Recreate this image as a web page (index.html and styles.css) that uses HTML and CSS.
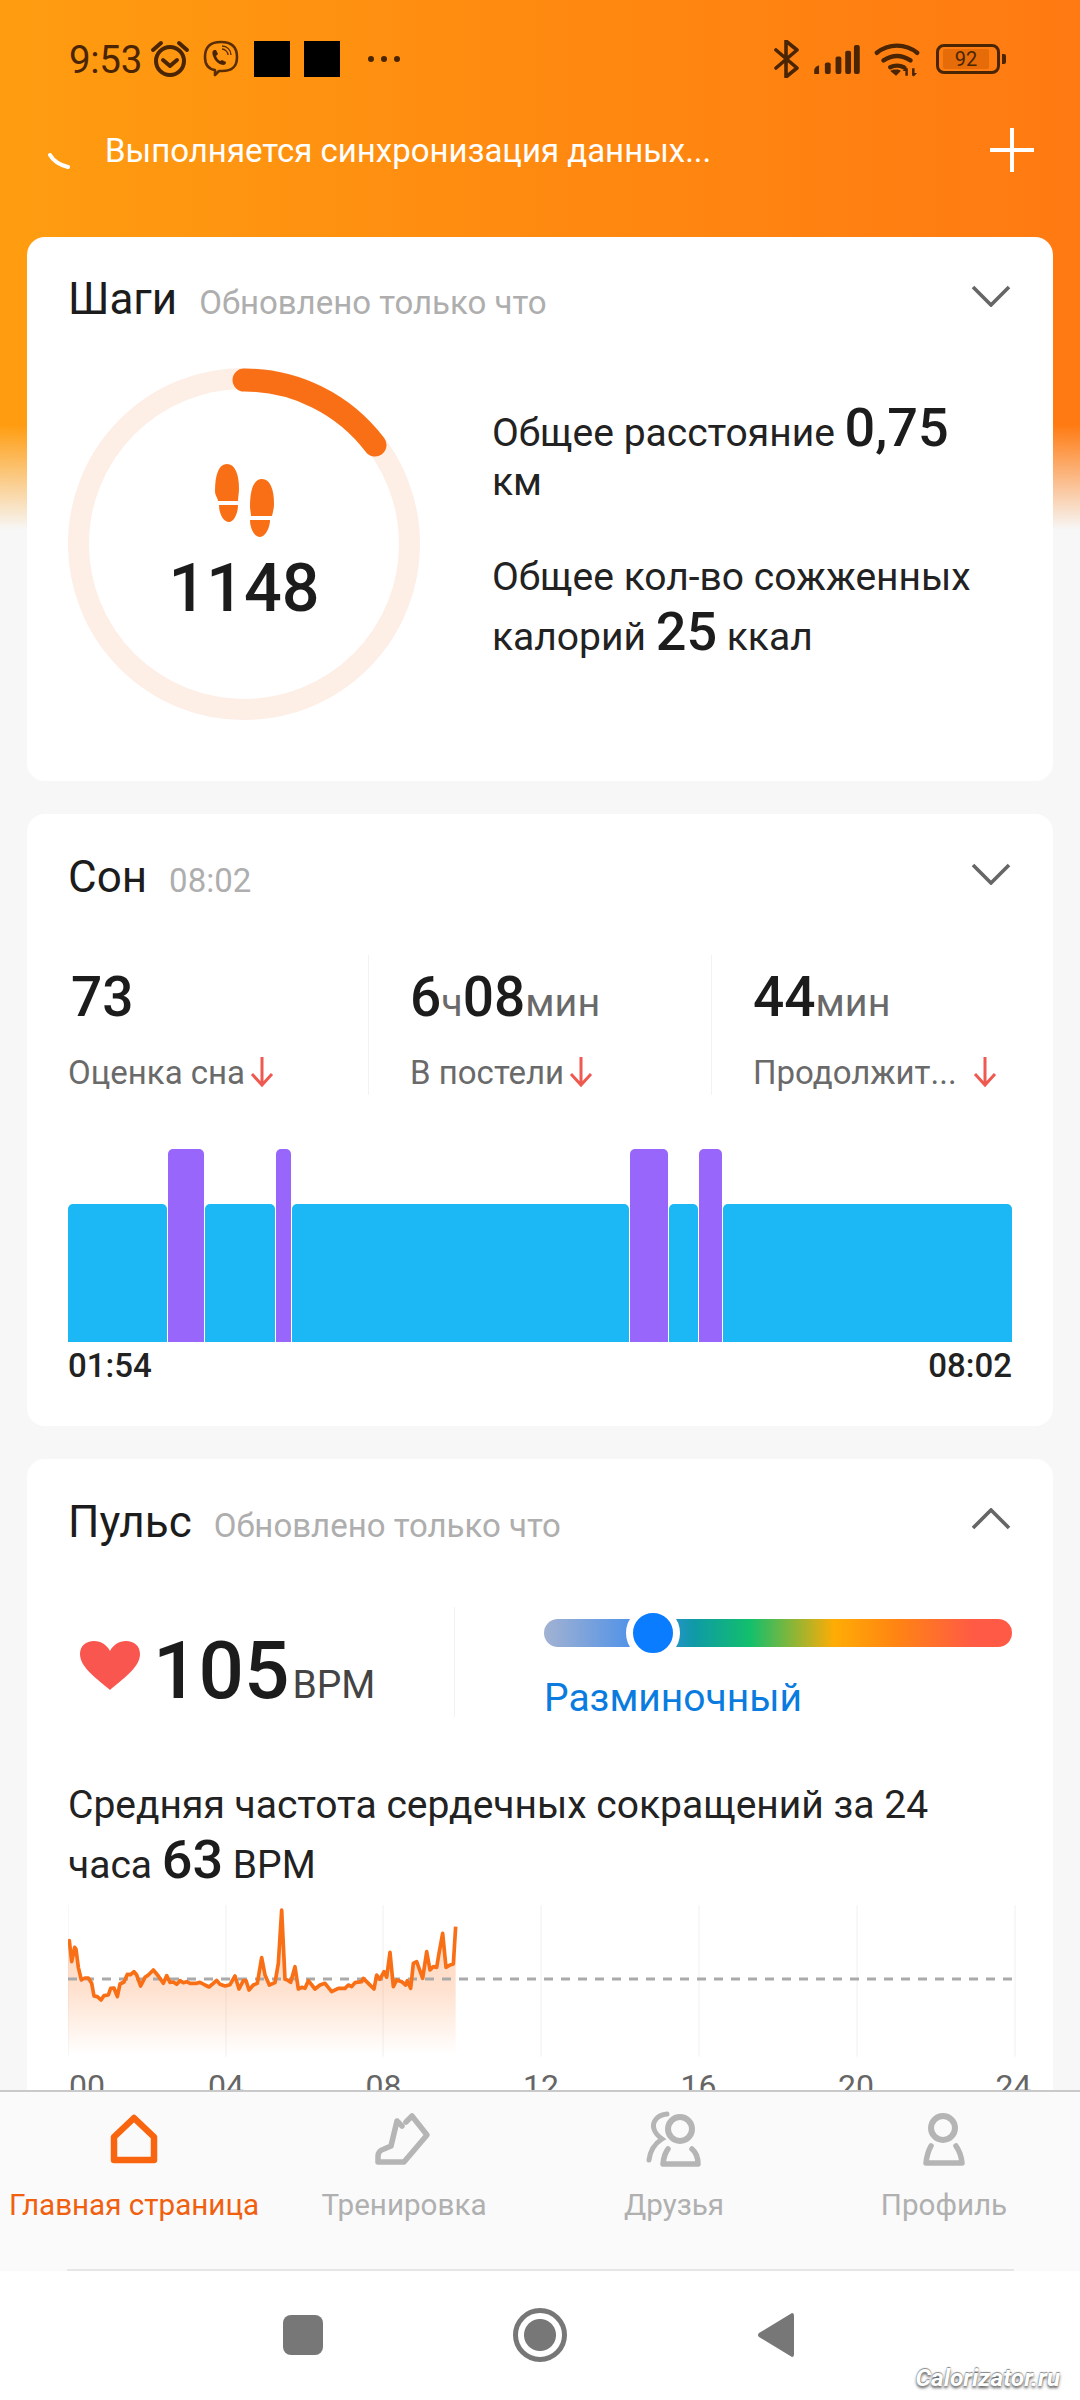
FILE: index.html
```html
<!DOCTYPE html>
<html lang="ru">
<head>
<meta charset="utf-8">
<title>Главная страница</title>
<link rel="stylesheet" href="styles.css">
</head>
<body>
<div class="screen">
  <div class="scroller">
    <div class="statusbar">
      <div class="status-left">
        <span class="clock">9:53</span>
        <svg class="ic-alarm" viewBox="0 0 40 38"><circle cx="20" cy="21" r="14" fill="none" stroke="#4a2504" stroke-width="4"/><path d="M13 20l7 6 7-6" fill="none" stroke="#4a2504" stroke-width="4" stroke-linecap="round" stroke-linejoin="round"/><path d="M3 10 11 3M37 10 29 3" stroke="#4a2504" stroke-width="4" stroke-linecap="round"/></svg>
        <svg class="ic-viber" viewBox="0 0 36 38"><path d="M12 30C5 29 2 25 2 17 2 7 7 2 18 2s16 5 16 15-5 14-15 14h-3l-4 4z" fill="none" stroke="#5a2e04" stroke-width="2.6" stroke-linejoin="round"/><path d="M11 10c-2 1-2 3-1 6 2 5 5 8 10 9 2 0 3-1 3-3l-4-2-2 1c-2-1-3-3-4-5l2-2-2-4z" fill="#4a2504"/><path d="M19 9c3 0 6 3 6 6M19 6c5 0 9 4 9 9" fill="none" stroke="#5a2e04" stroke-width="1.4"/></svg>
        <span class="blackbox"></span>
        <span class="blackbox"></span>
        <span class="dots"><i></i><i></i><i></i></span>
      </div>
      <div class="status-right">
        <svg class="ic-bt" viewBox="0 0 26 38"><path d="M2 10 23 28 12 37V1l11 9L2 28" fill="none" stroke="#4a2504" stroke-width="3.6" stroke-linejoin="round" stroke-linecap="round"/></svg>
        <svg class="ic-signal" viewBox="0 0 48 32"><g fill="#4a2504"><path d="M1 31v-4q0-3 5-5v9z"/><rect x="12" y="19" width="6" height="12" rx="2"/><rect x="23" y="13" width="6" height="18" rx="2"/><rect x="33" y="7" width="6" height="24" rx="2"/><rect x="42" y="1" width="6" height="30" rx="2"/></g></svg>
        <svg class="ic-wifi" viewBox="0 0 48 36"><path d="M3 11C15 1 33 1 45 11M10 19c9-6 19-6 28 0M17 26c4-2 10-2 14 0" fill="none" stroke="#4a2504" stroke-width="4.6" stroke-linecap="round"/><path d="M23 35l-6-5c3-2 9-2 11 0z" fill="#4a2504"/><path d="M34 35v-8M41 35v-8" stroke="#4a2504" stroke-width="2.6"/><path d="M30 30l4-5 0 5zM45 32l-4 4 0-4z" fill="#4a2504"/></svg>
        <span class="battery"><span class="battery-fill"><span class="battery-num">92</span></span></span>
        <span class="battery-nub"></span>
      </div>
    </div>

    <div class="syncbar">
      <div class="sync-left">
        <svg class="ic-spin" viewBox="0 0 24 16"><path d="M2 2C6 9 12 12 20 14" fill="none" stroke="#fff" stroke-width="4" stroke-linecap="round"/></svg>
        <span class="sync-text">Выполняется синхронизация данных...</span>
      </div>
      <svg class="ic-plus" viewBox="0 0 44 44"><path d="M22 0v44M0 22h44" stroke="#fff" stroke-width="4"/></svg>
    </div>

    <section class="card card-steps">
      <header class="card-head">
        <span class="card-title">Шаги</span>
        <span class="card-sub">Обновлено только что</span>
        <svg class="chev" viewBox="0 0 40 22"><path d="M2 2 20 20 38 2" fill="none" stroke="#666" stroke-width="3.6"/></svg>
      </header>
      <div class="steps-body">
        <div class="ring">
          <svg class="ring-svg" viewBox="0 0 352 352"><circle cx="176" cy="176" r="165.5" fill="none" stroke="#fdeee6" stroke-width="21"/><path d="M176 12A164 164 0 0 1 307 77" fill="none" stroke="#f96f15" stroke-width="23" stroke-linecap="round"/></svg>
          <div class="ring-center">
            <svg class="ic-feet" viewBox="0 0 59 73"><g fill="#f96f15"><path d="M0 27C0 10 4 0 12 0s12 10 12 25c0 4-1 8-1 12H3c0-3-3-5-3-10z"/><path d="M4 41h19c0 8-4 17-9 17-6 0-10-9-10-17z"/><path d="M35 42C35 25 39 15 47 15s12 10 12 25c0 4-1 8-2 12H36c0-3-1-6-1-10z"/><path d="M35 56h20c0 8-5 17-10 17-6 0-10-9-10-17z"/></g></svg>
            <span class="ring-num">1148</span>
          </div>
        </div>
        <div class="steps-text">
          <p class="line">Общее расстояние <b class="big">0,75</b> км</p>
          <p class="line">Общее кол-во сожженных калорий <b class="big">25</b> ккал</p>
        </div>
      </div>
    </section>

    <section class="card card-sleep">
      <header class="card-head">
        <span class="card-title">Сон</span>
        <span class="card-sub">08:02</span>
        <svg class="chev" viewBox="0 0 40 22"><path d="M2 2 20 20 38 2" fill="none" stroke="#666" stroke-width="3.6"/></svg>
      </header>
      <div class="stats">
        <div class="stat stat-1">
          <div class="stat-val val-73"><b>73</b></div>
          <div class="stat-label"><span>Оценка сна</span><svg class="arrow" viewBox="0 0 24 32"><path d="M12 1v28M2 18l10 11 10-11" fill="none" stroke="#ee5a50" stroke-width="3"/></svg></div>
        </div>
        <div class="stat stat-2">
          <div class="stat-val"><b>6</b><small>ч</small><b>08</b><small>мин</small></div>
          <div class="stat-label"><span>В постели</span><svg class="arrow" viewBox="0 0 24 32"><path d="M12 1v28M2 18l10 11 10-11" fill="none" stroke="#ee5a50" stroke-width="3"/></svg></div>
        </div>
        <div class="stat stat-3">
          <div class="stat-val"><b>44</b><small>мин</small></div>
          <div class="stat-label label-full"><span>Продолжит...</span><svg class="arrow" viewBox="0 0 24 32"><path d="M12 1v28M2 18l10 11 10-11" fill="none" stroke="#ee5a50" stroke-width="3"/></svg></div>
        </div>
      </div>
      <div class="sleep-chart">
        <div class="seg light" style="width:99px"></div>
        <div class="seg rem" style="width:36px"></div>
        <div class="seg light" style="width:70px"></div>
        <div class="seg rem" style="width:15px"></div>
        <div class="seg light" style="width:337px"></div>
        <div class="seg rem" style="width:38px"></div>
        <div class="seg light" style="width:29px"></div>
        <div class="seg rem" style="width:23px"></div>
        <div class="seg light" style="width:289px"></div>
      </div>
      <div class="sleep-times"><span>01:54</span><span>08:02</span></div>
    </section>

    <section class="card card-pulse">
      <header class="card-head">
        <span class="card-title">Пульс</span>
        <span class="card-sub">Обновлено только что</span>
        <svg class="chev" viewBox="0 0 40 22"><path d="M2 20 20 2 38 20" fill="none" stroke="#666" stroke-width="3.6"/></svg>
      </header>
      <div class="pulse-now">
        <div class="pulse-val">
          <svg class="ic-heart" viewBox="0 0 62 50"><path d="M31 50C20 40 1 28 1 14 1 6 7 1 15 1c7 0 13 4 16 10C34 5 40 1 47 1c8 0 14 5 14 13 0 14-19 26-30 36z" fill="#f9564f"/></svg>
          <b class="pulse-num">105</b><small class="pulse-unit">BPM</small>
        </div>
        <div class="pulse-zone">
          <div class="slider"><span class="knob"></span></div>
          <div class="zone-name">Разминочный</div>
        </div>
      </div>
      <p class="avg">Средняя частота сердечных сокращений за 24 часа <b class="big">63</b> BPM</p>
      <svg class="hr-chart" viewBox="84 45 2850 465">
        <defs><linearGradient id="hrfill" x1="0" y1="0" x2="0" y2="1"><stop offset="0" stop-color="#ff6a10" stop-opacity=".3"/><stop offset=".55" stop-color="#ff6a10" stop-opacity=".2"/><stop offset="1" stop-color="#ff6a10" stop-opacity="0"/></linearGradient></defs>
        <path d="M84 45V500M558 45V500M1029 45V500M1503 45V500M1977 45V500M2451 45V500M2925 45V500" stroke="#f0f0f0" stroke-width="3"/>
        <path d="M84 155 88 152 95 215 104 172 108 178 115 232 124 270 135 264 145 264 155 280 162 318 172 320 183 330 192 317 205 315 212 295 222 294 232 320 240 282 252 276 262 253 272 254 282 245 290 255 302 288 315 262 325 255 340 240 355 258 370 280 380 257 390 277 400 276 410 283 420 272 430 278 440 275 450 280 470 280 480 277 495 285 507 291 520 280 530 271 540 283 555 288 570 284 585 258 597 297 610 272 618 272 627 300 640 285 652 280 665 203 675 255 688 285 705 278 715 220 725 60 735 268 742 270 752 277 765 230 775 297 785 292 795 295 805 272 825 297 840 285 855 280 875 305 895 295 915 295 925 285 935 290 945 278 965 275 970 265 985 280 1002 297 1010 255 1020 268 1032 245 1040 262 1050 187 1060 290 1070 270 1085 275 1097 285 1102 272 1112 295 1120 220 1130 215 1148 265 1160 185 1170 240 1180 230 1190 232 1197 190 1208 130 1218 232 1230 225 1240 222 1247 110V495H84Z" fill="url(#hrfill)"/>
        <path d="M84 267H2925" stroke="#aaa" stroke-width="9" stroke-dasharray="27 24"/>
        <path d="M84 155 88 152 95 215 104 172 108 178 115 232 124 270 135 264 145 264 155 280 162 318 172 320 183 330 192 317 205 315 212 295 222 294 232 320 240 282 252 276 262 253 272 254 282 245 290 255 302 288 315 262 325 255 340 240 355 258 370 280 380 257 390 277 400 276 410 283 420 272 430 278 440 275 450 280 470 280 480 277 495 285 507 291 520 280 530 271 540 283 555 288 570 284 585 258 597 297 610 272 618 272 627 300 640 285 652 280 665 203 675 255 688 285 705 278 715 220 725 60 735 268 742 270 752 277 765 230 775 297 785 292 795 295 805 272 825 297 840 285 855 280 875 305 895 295 915 295 925 285 935 290 945 278 965 275 970 265 985 280 1002 297 1010 255 1020 268 1032 245 1040 262 1050 187 1060 290 1070 270 1085 275 1097 285 1102 272 1112 295 1120 220 1130 215 1148 265 1160 185 1170 240 1180 230 1190 232 1197 190 1208 130 1218 232 1230 225 1240 222 1247 110" fill="none" stroke="#f96f15" stroke-width="11" stroke-linejoin="round"/>
      </svg>
      <div class="hr-labels"><span>00</span><span>04</span><span>08</span><span>12</span><span>16</span><span>20</span><span>24</span></div>
    </section>
  </div>

  <nav class="tabs">
    <div class="tab tab-active">
      <svg class="tab-ic" viewBox="0 0 60 60"><path d="M30 8 50 27V50H10V27Z" fill="none" stroke="#f9640f" stroke-width="6.5" stroke-linejoin="round"/></svg>
      <span>Главная страница</span>
    </div>
    <div class="tab">
      <svg class="tab-ic" viewBox="0 0 60 60"><path d="M32 12 38 6 53 25 30 52H4V46Q4 41 10 39L17 36 23 11 28 16" fill="none" stroke="#b5b5b5" stroke-width="5.5" stroke-linejoin="round" stroke-linecap="round"/></svg>
      <span>Тренировка</span>
    </div>
    <div class="tab">
      <svg class="tab-ic" viewBox="0 0 60 60"><circle cx="36" cy="19" r="12" fill="none" stroke="#b5b5b5" stroke-width="6"/><path d="M24 39Q20 44 19 54H54Q54 44 48 39" fill="none" stroke="#b5b5b5" stroke-width="5.5" stroke-linejoin="round" stroke-linecap="round"/><path d="M23 4C12 5 8 13 10 19 11 23 14 26 18 29 10 34 6 42 5 50" fill="none" stroke="#b5b5b5" stroke-width="5" stroke-linecap="round"/></svg>
      <span>Друзья</span>
    </div>
    <div class="tab">
      <svg class="tab-ic" viewBox="0 0 60 60"><circle cx="29" cy="18" r="12" fill="none" stroke="#b5b5b5" stroke-width="6"/><path d="M17 36Q13 43 12 53H48Q47 43 42 36" fill="none" stroke="#b5b5b5" stroke-width="5.5" stroke-linejoin="round" stroke-linecap="round"/></svg>
      <span>Профиль</span>
    </div>
  </nav>

  <div class="navbar">
    <span class="nav-square"></span>
    <span class="nav-circle"></span>
    <svg class="nav-back" viewBox="0 0 38 46"><path d="M35 1q2 0 2 3v38q0 3-2 3L2 25q-2-2 0-4z" fill="#777"/></svg>
    <span class="watermark">Calorizator.ru</span>
  </div>
</div>
</body>
</html>
```
FILE: styles.css
```css
* { box-sizing: border-box; }
html, body { margin: 0; padding: 0; }
body { width: 1080px; height: 2400px; font-family: Roboto, "Noto Sans", sans-serif; color: #1c1c1c; background: #fff; overflow: hidden; }
p { margin: 0; }
b { font-weight: 500; }

.screen { width: 1080px; height: 2400px; display: flex; flex-direction: column; overflow: hidden; }
.scroller {
  height: 2090px; flex: none; overflow: hidden; padding: 0 27px;
  background:
    linear-gradient(to bottom, rgba(247,247,247,0) 425px, #f7f7f7 530px),
    linear-gradient(90deg, #ff9d10 0%, #ff8a10 50%, #ff7a12 100%);
  background-color: #f7f7f7;
}

.statusbar { height: 118px; margin: 0 -27px; padding: 41px 74px 0 69px; display: flex; justify-content: space-between; align-items: flex-start; color: #4a2504; }
.status-left, .status-right { display: flex; align-items: center; height: 36px; }
.clock { font-size: 38.5px; font-weight: 400; margin-right: 8px; letter-spacing: -.3px; }
.ic-alarm { width: 40px; height: 38px; margin-right: 13px; }
.ic-viber { width: 36px; height: 38px; margin-right: 15px; }
.blackbox { width: 36px; height: 36px; background: #000; margin-right: 14px; }
.dots { display: flex; gap: 7px; margin-left: 14px; }
.dots i { width: 6px; height: 6px; border-radius: 50%; background: #4a2504; display: block; }
.ic-bt { width: 26px; height: 38px; margin-right: 13px; }
.ic-signal { width: 47px; height: 31px; margin-right: 14px; }
.ic-wifi { width: 46px; height: 35px; margin-right: 16px; }
.battery { width: 64px; height: 30px; border: 3px solid #4a2504; border-radius: 8px; padding: 2px 4px; display: flex; }
.battery-fill { width: 46px; height: 100%; background: #e56c08; display: flex; align-items: center; justify-content: center; border-radius: 2px; }
.battery-num { font-size: 20px; color: #4a2504; line-height: 1; }
.battery-nub { width: 4px; height: 10px; background: #4a2504; margin-left: 2px; border-radius: 0 2px 2px 0; }

.syncbar { height: 119px; padding: 10px 19px 0 21px; display: flex; justify-content: space-between; align-items: flex-start; }
.sync-left { display: flex; align-items: center; height: 44px; }
.ic-spin { width: 24px; height: 16px; margin: 22px 33px 0 0; }
.sync-text { font-size: 33px; color: #fff; }
.ic-plus { width: 44px; height: 44px; }

.card { background: #fff; border-radius: 18px; width: 1026px; padding: 0 41px; margin-bottom: 33px; }
.card-steps { height: 544px; padding-top: 37px; }
.card-sleep { height: 612px; padding-top: 38px; }
.card-pulse { height: 800px; padding-top: 38px; }

.card-head { display: flex; align-items: baseline; height: 57px; }
.card-steps .card-head { height: 58px; }
.card-pulse .card-head { height: 58px; }
.card-title { font-size: 44px; line-height: 50px; color: #1c1c1c; margin-right: 22px; }
.card-sub { font-size: 33px; color: #aeaeae; }
.chev { width: 40px; height: 22px; margin-left: auto; margin-right: 1px; align-self: flex-start; margin-top: 11px; }

.steps-body { display: flex; margin-top: 36px; }
.ring { width: 352px; height: 352px; position: relative; flex: none; }
.ring-svg { width: 352px; height: 352px; display: block; }
.ring-center { position: absolute; inset: 0; display: flex; flex-direction: column; align-items: center; padding-top: 96px; }
.ic-feet { width: 59px; height: 73px; }
.ring-num { font-size: 66.5px; font-weight: 500; line-height: 76px; margin-top: 13px; }

.steps-text { margin-left: 72px; width: 490px; padding-top: 28px; }
.line { font-size: 39px; margin-bottom: 49px; color: #222; }
.big { font-size: 54px; font-weight: 500; color: #1c1c1c; }

.stats { display: flex; margin-top: 46px; height: 140px; }
.stat { border-right: 1px solid #f2f2f2; }
.stat-1 { width: 301px; }
.stat-2 { width: 343px; padding-left: 41px; }
.stat-3 { flex: 1; padding-left: 41px; border-right: 0; }
.stat-val { height: 72px; display: flex; align-items: baseline; padding-top: 12px; line-height: 60px; }
.val-73 { padding-left: 3px; }
.stat-val b { font-size: 55px; font-weight: 500; }
.stat-val small { font-size: 39.5px; color: #6a6a6a; }
.stat-label { font-size: 33px; color: #6a6a6a; display: flex; align-items: center; margin-top: 25px; height: 40px; }
.label-full { justify-content: space-between; width: 244px; }
.arrow { width: 24px; height: 32px; margin-left: 5px; }

.sleep-chart { display: flex; align-items: flex-end; gap: 1px; height: 193px; margin-top: 54px; }
.seg { border-radius: 5px 5px 0 0; flex: none; }
.light { height: 138px; background: #1cb8f6; }
.rem { height: 193px; background: #9966fb; }
.sleep-times { display: flex; justify-content: space-between; font-size: 33px; font-weight: 500; color: #222; line-height: 40px; margin-top: 4px; }

.pulse-now { display: flex; margin-top: 52px; height: 110px; }
.pulse-val { width: 387px; border-right: 1px solid #f2f2f2; display: flex; align-items: flex-end; height: 110px; padding-left: 11px; }
.ic-heart { width: 62px; height: 50px; margin-bottom: 27px; margin-right: 12px; flex: none; }
.pulse-num { font-size: 80px; line-height: 92px; }
.pulse-unit { font-size: 39px; color: #444; line-height: 64px; margin-left: 3px; }
.pulse-zone { margin-left: 89px; flex: 1; padding-top: 12px; }
.slider { height: 28px; border-radius: 14px; position: relative; background: linear-gradient(90deg, #a2b2d2 0%, #3f8bec 23%, #0f9aa6 32%, #12bf6c 44%, #ffac05 62%, #ff8512 75%, #ff5a46 92%); }
.knob { position: absolute; left: 82px; top: -13px; width: 54px; height: 54px; border-radius: 50%; background: #0a7cff; border: 7px solid #fff; }
.zone-name { font-size: 39px; color: #0a7ce0; margin-top: 29px; line-height: 44px; }

.avg { font-size: 39px; margin-top: 65px; color: #222; width: 900px; }
.hr-chart { display: block; width: 950px; height: 155px; margin-top: 14px; }
.hr-labels { display: grid; grid-template-columns: 139px repeat(5, 157.5px) auto; font-size: 32px; color: #666; line-height: 40px; margin-top: 6px; padding-left: 1px; }

.tabs { height: 181px; flex: none; background: #fafafa; border-top: 2px solid #c9c9c9; display: grid; grid-template-columns: repeat(4, 270px); position: relative; padding-right: 1px; margin-left: -1px; }
.tabs::after { content: ""; position: absolute; left: 68px; right: 66px; bottom: 0; height: 2px; background: #e6e6e6; }
.tab { display: flex; flex-direction: column; align-items: center; padding-top: 18px; font-size: 29.6px; color: #b0b0b0; }
.tab-active { color: #f0600f; }
.tab-ic { width: 60px; height: 60px; margin-bottom: 18px; }

.navbar { flex: 1; background: #fff; position: relative; display: flex; align-items: center; padding: 0 0 0 283px; height: 129px; }
.nav-square { width: 40px; height: 40px; border-radius: 8px; background: #777; margin-top: -1px; }
.nav-circle { width: 54px; height: 54px; border-radius: 50%; margin-left: 190px; border: 5px solid #777; background: radial-gradient(circle, #777 0 15.5px, #fff 16.5px); margin-top: -1px; }
.nav-back { width: 38px; height: 46px; margin-left: 190px; margin-top: -1px; }
.watermark { position: absolute; right: 20px; bottom: 8px; font-size: 24.5px; font-weight: 700; font-style: italic; color: #fff; text-shadow: 0 2px 3px #555, 0 -1px 1px #888; }
```
